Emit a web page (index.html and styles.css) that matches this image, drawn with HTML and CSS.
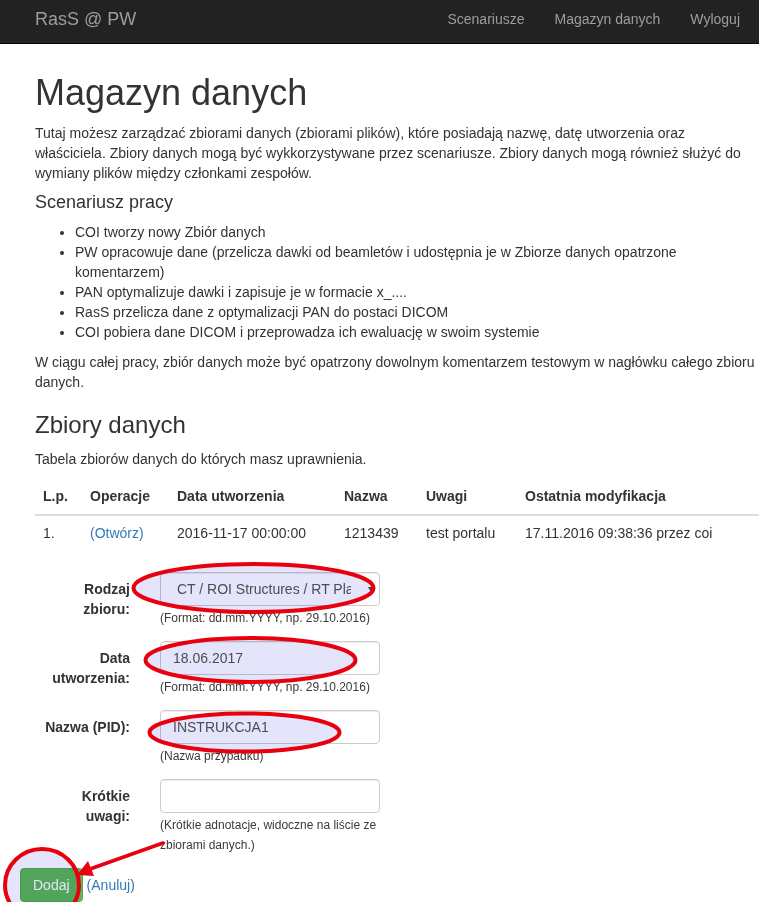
FILE: index.html
```html
<!DOCTYPE html>
<html lang="pl">
<head>
<meta charset="utf-8">
<title>Magazyn danych</title>
<link rel="stylesheet" href="styles.css">
</head>
<body>
<nav class="navbar">
  <a class="brand" href="#">RasS @ PW</a>
  <ul class="nav">
    <li><a href="#">Scenariusze</a></li>
    <li><a href="#">Magazyn danych</a></li>
    <li><a href="#">Wyloguj</a></li>
  </ul>
</nav>
<main class="container">
  <h1>Magazyn danych</h1>
  <p>Tutaj możesz zarządzać zbiorami danych (zbiorami plików), które posiadają nazwę, datę utworzenia oraz właściciela. Zbiory danych mogą być wykkorzystywane przez scenariusze. Zbiory danych mogą również służyć do wymiany plików między członkami zespołów.</p>
  <h4>Scenariusz pracy</h4>
  <ul class="steps">
    <li>COI tworzy nowy Zbiór danych</li>
    <li>PW opracowuje dane (przelicza dawki od beamletów i udostępnia je w Zbiorze danych opatrzone komentarzem)</li>
    <li>PAN optymalizuje dawki i zapisuje je w formacie x_....</li>
    <li>RasS przelicza dane z optymalizacji PAN do postaci DICOM</li>
    <li>COI pobiera dane DICOM i przeprowadza ich ewaluację w swoim systemie</li>
  </ul>
  <p>W ciągu całej pracy, zbiór danych może być opatrzony dowolnym komentarzem testowym w nagłówku całego zbioru danych.</p>
  <h3>Zbiory danych</h3>
  <p>Tabela zbiorów danych do których masz uprawnienia.</p>
  <table class="table">
    <thead>
      <tr>
        <th class="c-lp">L.p.</th>
        <th class="c-op">Operacje</th>
        <th class="c-date">Data utworzenia</th>
        <th class="c-name">Nazwa</th>
        <th class="c-notes">Uwagi</th>
        <th class="c-mod">Ostatnia modyfikacja</th>
      </tr>
    </thead>
    <tbody>
      <tr>
        <td>1.</td>
        <td><a href="#">(Otwórz)</a></td>
        <td>2016-11-17 00:00:00</td>
        <td>1213439</td>
        <td>test portalu</td>
        <td>17.11.2016 09:38:36 przez coi</td>
      </tr>
    </tbody>
  </table>
  <form class="form">
    <div class="form-row">
      <label class="form-label" for="kind">Rodzaj zbioru:</label>
      <div class="form-field">
        <div class="select-wrap">
          <select id="kind" class="form-control select">
            <option>CT / ROI Structures / RT Plan</option>
          </select>
        </div>
        <span class="help">(Format: dd.mm.YYYY, np. 29.10.2016)</span>
      </div>
    </div>
    <div class="form-row">
      <label class="form-label" for="date">Data utworzenia:</label>
      <div class="form-field">
        <input id="date" class="form-control" type="text" value="18.06.2017">
        <span class="help">(Format: dd.mm.YYYY, np. 29.10.2016)</span>
      </div>
    </div>
    <div class="form-row">
      <label class="form-label" for="pid">Nazwa (PID):</label>
      <div class="form-field">
        <input id="pid" class="form-control" type="text" value="INSTRUKCJA1">
        <span class="help">(Nazwa przypadku)</span>
      </div>
    </div>
    <div class="form-row">
      <label class="form-label" for="notes">Krótkie uwagi:</label>
      <div class="form-field">
        <input id="notes" class="form-control" type="text" value="">
        <span class="help">(Krótkie adnotacje, widoczne na liście ze zbiorami danych.)</span>
      </div>
    </div>
    <div class="form-actions">
      <button type="button" class="btn-success">Dodaj</button>
      <a href="#">(Anuluj)</a>
    </div>
  </form>
</main>
<svg class="annotations" width="759" height="916" viewBox="0 0 759 916" aria-hidden="true">
  <g class="marks-fill" fill="#e4e4fb" stroke="none">
    <ellipse cx="253.5" cy="588" rx="120" ry="24"/>
    <ellipse cx="250.5" cy="660" rx="105" ry="22"/>
    <ellipse cx="244.5" cy="732.5" rx="95" ry="19"/>
    <ellipse cx="42" cy="885" rx="37" ry="36"/>
  </g>
  <g fill="none" stroke="#e8000f" stroke-width="4">
    <ellipse cx="253.5" cy="588" rx="120" ry="24"/>
    <ellipse cx="250.5" cy="660" rx="105" ry="22"/>
    <ellipse cx="244.5" cy="732.5" rx="95" ry="19"/>
    <ellipse cx="42" cy="885" rx="37" ry="36"/>
  </g>
  <line x1="163" y1="843" x2="90" y2="869" stroke="#e8000f" stroke-width="3.5" stroke-linecap="round"/>
  <polygon points="77,875 94,876 88,861" fill="#e8000f"/>
</svg>
</body>
</html>
```
FILE: styles.css
```css
html, body {
  margin: 0;
  padding: 0;
}
body {
  position: relative;
  font-family: "Liberation Sans", Arial, sans-serif;
  font-size: 14px;
  line-height: 20px;
  color: #333;
  background: #fff;
  overflow: hidden;
}
a {
  color: #337ab7;
  text-decoration: none;
}

/* Navbar */
.navbar {
  display: flex;
  align-items: center;
  justify-content: space-between;
  height: 43px;
  background: #222;
  border-bottom: 1px solid #080808;
  padding: 0 4px 0 35px;
}
.brand {
  color: #9d9d9d;
  font-size: 18px;
  line-height: 20px;
  margin-top: -6px;
}
.nav {
  display: flex;
  list-style: none;
  margin: 0;
  padding: 0;
}
.nav a {
  display: block;
  padding: 0 15px;
  color: #9d9d9d;
  line-height: 20px;
  margin-top: -6px;
}

/* Content */
.container {
  padding: 9px 0 0 35px;
}
h1 {
  font-size: 36px;
  font-weight: 500;
  line-height: 1.1;
  margin: 20px 0 10px;
}
h3 {
  font-size: 24px;
  font-weight: 500;
  line-height: 1.1;
  margin: 20px 0 10px;
}
h4 {
  font-size: 18px;
  font-weight: 500;
  line-height: 1.1;
  margin: 10px 0 10px;
}
p {
  margin: 0 0 10px;
  padding-right: 4px;
}
.steps {
  margin: 0 0 10px;
  padding-left: 40px;
}

/* Table */
.table {
  width: 100%;
  table-layout: fixed;
  border-collapse: collapse;
  border-spacing: 0;
  margin-bottom: 21px;
}
.table th,
.table td {
  padding: 7px 8px 8px;
  text-align: left;
  vertical-align: bottom;
  line-height: 20px;
  white-space: nowrap;
}
.table th {
  font-weight: bold;
  border-bottom: 2px solid #ddd;
}
.c-lp { width: 31px; }
.c-op { width: 71px; }
.c-date { width: 151px; }
.c-name { width: 66px; }
.c-notes { width: 83px; }
.c-mod { width: auto; }

/* Form */
.form-row {
  display: grid;
  grid-template-columns: 95px 220px;
  column-gap: 30px;
  margin-bottom: 13px;
}
.form-label {
  padding-top: 7px;
  font-weight: bold;
  text-align: right;
  line-height: 20px;
}
.form-field {
  display: flex;
  flex-direction: column;
}
.form-control {
  box-sizing: border-box;
  width: 220px;
  height: 34px;
  padding: 6px 12px;
  font-family: "Liberation Sans", Arial, sans-serif;
  font-size: 14px;
  line-height: 20px;
  color: #555;
  background: #fff;
  border: 1px solid #ccc;
  border-radius: 4px;
  box-shadow: inset 0 1px 1px rgba(0,0,0,.075);
  margin: 0;
}
.select-wrap {
  position: relative;
  width: 220px;
}
.select {
  appearance: none;
  -webkit-appearance: none;
  padding-left: 16px;
  padding-right: 28px;
}
.select-wrap::after {
  content: "";
  position: absolute;
  right: 6px;
  top: 15px;
  border-left: 3.5px solid transparent;
  border-right: 3.5px solid transparent;
  border-top: 5px solid #444;
}
.help {
  display: block;
  margin-top: 2px;
  font-size: 12px;
  line-height: 20px;
  color: #3a3a3a;
  width: 220px;
}
.form-actions {
  display: flex;
  align-items: center;
  gap: 4px;
  margin-left: -15px;
}
.btn-success {
  box-sizing: border-box;
  height: 34px;
  padding: 6px 12px;
  font-family: "Liberation Sans", Arial, sans-serif;
  font-size: 14px;
  line-height: 20px;
  color: #fff;
  background: #5cb85c;
  border: 1px solid #4cae4c;
  border-radius: 4px;
}

/* Annotation overlay */
.annotations {
  position: absolute;
  top: 0;
  left: 0;
  pointer-events: none;
}
.marks-fill ellipse {
  mix-blend-mode: multiply;
}
```
